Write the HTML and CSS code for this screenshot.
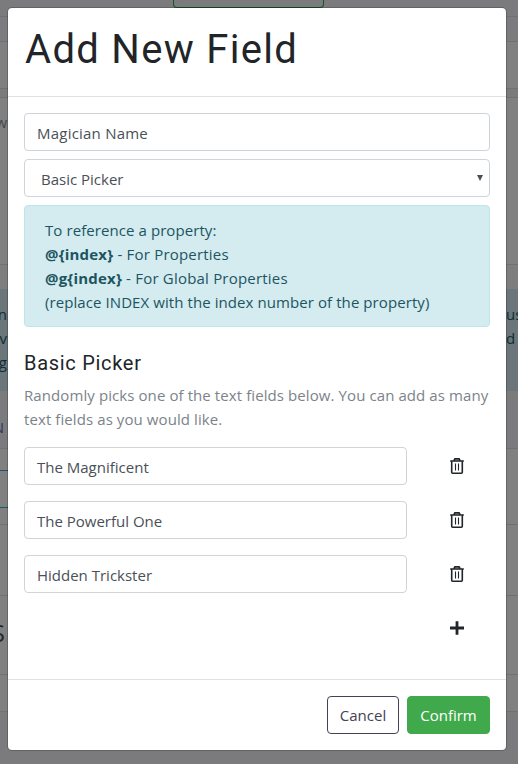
FILE: index.html
```html
<!DOCTYPE html>
<html lang="en">
<head>
<meta charset="utf-8">
<title>Add New Field</title>
<link rel="stylesheet" href="styles.css">
</head>
<body>
<svg class="sprites" aria-hidden="true">
  <symbol id="trash" viewBox="0 0 14 16">
    <path d="M4 2.5 5 .8h4l1 1.7z" fill="#8b8e91"/>
    <path d="M.2 3h13.6M4 2.4 4.9.8h4.2l.9 1.6M1.7 3v11.2q0 1 1 1h8.6q1 0 1-1V3" fill="none" stroke="#212529" stroke-width="1.6"/>
    <path d="M5.5 5.5v7M8.5 5.5v7" fill="none" stroke="#212529" stroke-width="1.1"/>
  </symbol>
  <symbol id="plus" viewBox="0 0 14 14">
    <path d="M7 .2v13.6M0 7h14" fill="none" stroke="#212529" stroke-width="2.8"/>
  </symbol>
</svg>
<div class="page">
  <div class="band top"><div class="ghost-button"></div></div>
  <div class="band strip"></div>
  <div class="band row"></div>
  <div class="band gap"></div>
  <div class="band card"><span class="edge">w</span></div>
  <div class="band space"></div>
  <div class="band note">
    <div class="line"><span class="edge">n</span><span class="end">us</span></div>
    <div class="line"><span class="edge">v</span><span class="end">d a</span></div>
    <div class="line"><span class="edge">g</span></div>
  </div>
  <div class="band tab"><span class="edge">N</span></div>
  <div class="band form"><div class="outline"></div></div>
  <div class="band blank"></div>
  <div class="band heading"><span class="edge">S</span></div>
  <div class="band last"></div>
  <div class="band foot"></div>
</div>
<div class="modal">
  <header class="modal-header"><h1>Add New Field</h1></header>
  <main class="modal-body">
    <div class="control name">Magician Name</div>
    <div class="control select"><span>Basic Picker</span><svg class="arrow" viewBox="0 0 6 6"><path d="M0 0h6L3 6z" fill="#495057"/></svg></div>
    <div class="alert">
      <div>To reference a property:</div>
      <div class="token"><b>@{index}</b> - For Properties</div>
      <div class="token"><b>@g{index}</b> - For Global Properties</div>
      <div>(replace INDEX with the index number of the property)</div>
    </div>
    <h2>Basic Picker</h2>
    <p>Randomly picks one of the text fields below. You can add as many<br>text fields as you would like.</p>
    <div class="entry"><div class="control">The Magnificent</div><svg class="icon"><use href="#trash"/></svg></div>
    <div class="entry"><div class="control">The Powerful One</div><svg class="icon"><use href="#trash"/></svg></div>
    <div class="entry"><div class="control">Hidden Trickster</div><svg class="icon"><use href="#trash"/></svg></div>
    <div class="entry add"><svg class="icon plus"><use href="#plus"/></svg></div>
  </main>
  <footer class="modal-footer"><div class="btn cancel">Cancel</div><div class="btn confirm">Confirm</div></footer>
</div>
</body>
</html>
```

FILE: styles.css
```css
* { box-sizing: border-box; }
body { margin: 0; width: 518px; height: 764px; overflow: hidden; background: #808080; font: 15px/24px "Open Sans", "Noto Sans", sans-serif; color: #212529; }
.sprites { position: absolute; width: 0; height: 0; }

.page { height: 764px; overflow: hidden; }
.band { border-bottom: 1px solid #717173; overflow: hidden; color: #24282b; }
.top { height: 17px; background: #7b7b7d; }
.ghost-button { width: 151px; height: 8px; margin-left: 173px; border: 1px solid #14532a; border-top: 0; border-radius: 0 0 4px 4px; }
.strip { height: 25px; background: #7c7c7e; }
.row { height: 47px; }
.gap { height: 9px; background: #7b7b7e; }
.card { height: 167px; padding-top: 12px; color: #44484c; }
.space { height: 24px; background: #7e7e7f; border: 0; }
.note { height: 102px; padding-top: 13px; background: #6a7679; border: 0; color: #102c33; }
.tab { height: 58px; padding-top: 24px; background: #7b7b7d; color: #32365f; }
.form { height: 76px; padding-top: 21px; }
.outline { width: 60px; height: 38px; margin-left: -20px; border: 1px solid #155b66; }
.blank { height: 71px; }
.heading { height: 79px; padding-top: 23px; }
.heading .edge { font-size: 24px; line-height: 28px; }
.last { height: 37px; }
.foot { height: 53px; background: #7b7b7d; border: 0; }
.line { display: flex; justify-content: space-between; height: 24px; }
.edge { display: flex; justify-content: flex-end; width: 7px; }
.tab .edge { width: 4px; }
.heading .edge { width: 5px; }
.end { width: 12px; white-space: nowrap; }

.modal { position: absolute; left: 7px; top: 7px; width: 500px; height: 744px; display: flex; flex-direction: column; background: #fff; background-clip: padding-box; border: 1px solid rgba(0, 0, 0, .2); border-radius: 5px; }
.modal-header { height: 90px; padding: 12px 17px; border-bottom: 1px solid #dee2e6; }
h1 { margin: 0; font: 400 40px/60px Roboto, sans-serif; letter-spacing: 1.3px; white-space: nowrap; }
.modal-body { flex: 1; padding: 16px; white-space: nowrap; }
.control { height: 38px; padding: 7px 12px; border: 1px solid #ced4da; border-radius: 4px; color: #495057; background: #fff; }
.name { letter-spacing: .22px; }
.select { display: flex; justify-content: space-between; margin-top: 8px; padding-left: 16px; padding-right: 6px; }
.arrow { width: 6px; height: 6px; margin-top: 15px; align-self: flex-start; margin-top: 8px; }
.alert { height: 122px; margin-top: 8px; padding: 12px 20px; border: 1px solid #bee5eb; border-radius: 4px; background: #d4ebf0; color: #1c5560; letter-spacing: .08px; }
.alert .token { letter-spacing: .2px; }
h2 { margin: 23px 0 7px; font: 400 20px/26px Roboto, sans-serif; letter-spacing: .7px; }
p { margin: 0 0 16px; color: #7b838a; letter-spacing: .09px; }
.entry { display: grid; grid-template-columns: 383px 100px; height: 38px; margin-bottom: 16px; align-items: center; margin-right: -17px; }
.icon { width: 14px; height: 16px; justify-self: center; }
.plus { grid-column: 2; height: 14px; }
.modal-footer { display: flex; justify-content: flex-end; gap: 8px; height: 71px; padding: 16px; border-top: 1px solid #dee2e6; }
.btn { height: 38px; border: 1px solid #454255; border-radius: 4px; line-height: 37px; text-align: center; color: #454255; }
.cancel { width: 72px; }
.confirm { width: 83px; border-color: #3fa94b; background: #3fa94b; color: #fff; }
```
